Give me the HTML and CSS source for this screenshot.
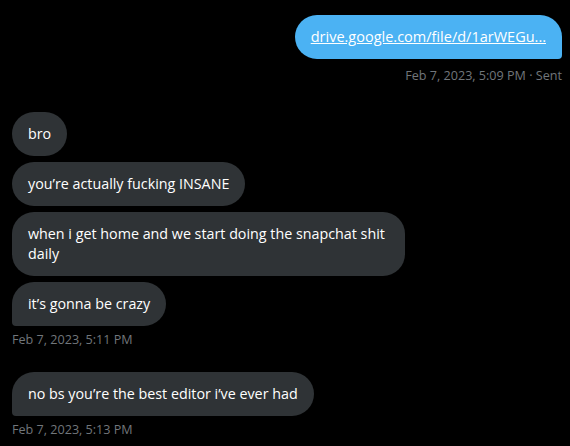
FILE: index.html
```html
<!DOCTYPE html>
<html>
<head>
<meta charset="utf-8">
<link rel="stylesheet" href="styles.css">
</head>
<body>
<div class="chat">
  <div class="group sent">
    <div class="bubble out last"><a class="link" href="#">drive.google.com/file/d/1arWEGu...</a></div>
    <div class="meta meta-sent">Feb 7, 2023, 5:09 PM · Sent</div>
  </div>
  <div class="group recv">
    <div class="bubble in">bro</div>
    <div class="bubble in">you’re actually fucking INSANE</div>
    <div class="bubble in wide">when i get home and we start doing the snapchat shit daily</div>
    <div class="bubble in last">it’s gonna be crazy</div>
    <div class="meta">Feb 7, 2023, 5:11 PM</div>
  </div>
  <div class="group recv second">
    <div class="bubble in last">no bs you’re the best editor i’ve ever had</div>
    <div class="meta">Feb 7, 2023, 5:13 PM</div>
  </div>
</div>
</body>
</html>
```
FILE: styles.css
```css
html, body {
  margin: 0;
  padding: 0;
  background: #000;
}
body {
  font-family: "Open Sans", "Noto Sans", sans-serif;
  color: #e7e9ea;
}
.chat {
  display: flex;
  flex-direction: column;
  padding: 15px 8px 0 12px;
}
.group {
  display: flex;
  flex-direction: column;
  gap: 6px;
}
.sent {
  align-items: flex-end;
}
.recv {
  align-items: flex-start;
  margin-top: 28px;
}
.recv.second {
  margin-top: 24px;
}
.bubble {
  font-size: 14.3px;
  line-height: 20px;
  padding: 12px 16px;
  border-radius: 22px;
  max-width: 361px;
}
.in {
  background: #2f3336;
  color: #fff;
}
.in.last {
  border-bottom-left-radius: 4px;
}
.out {
  background: #4bb2f3;
  color: #fff;
  font-size: 14.5px;
}
.out.last {
  border-bottom-right-radius: 4px;
}
.link {
  color: #fff;
  text-decoration: underline;
}
.meta {
  font-size: 12.6px;
  line-height: 16px;
  color: #71767b;
}
.meta-sent {
  margin-top: 3px;
}
```
